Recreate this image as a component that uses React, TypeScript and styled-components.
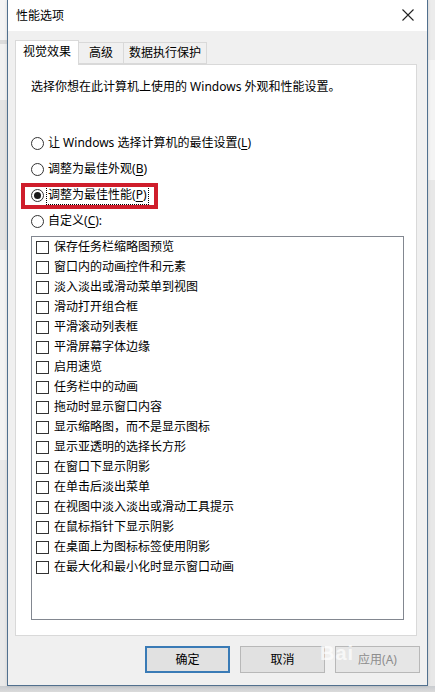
import React from "react";
import styled, { createGlobalStyle } from "styled-components";

const Global = createGlobalStyle`
  html, body { margin: 0; padding: 0; }
  body {
    width: 435px;
    height: 692px;
    overflow: hidden;
    background: #d6d6d6;
    font-family: "Noto Sans", "Noto Sans CJK SC", sans-serif;
    font-size: 12px;
    color: #000;
  }
`;

const Screen = styled.div`
  width: 435px;
  height: 692px;
  display: grid;
  grid-template-columns: 7px 421px 7px;
  grid-template-rows: 686px 6px;
  background: #d4d4d4;
`;

const BackStrip = styled.div<{ $side: "left" | "right" }>`
  background: ${(p) =>
    p.$side === "left"
      ? "linear-gradient(#f4f4f4 0 40px, #dcdcdc 40px 44px, #f1f1f1 44px 100px, #e4e4e4 100px 250px, #f3f3f3 250px 460px, #e9e9e9 460px)"
      : "linear-gradient(#ececec 0 60px, #f4f4f4 60px 180px, #e8e8e8 180px)"};
`;

const BottomStrip = styled.div`
  grid-column: 1 / 4;
  background: linear-gradient(#c9ccd0, #dadada);
`;

const Dialog = styled.div`
  position: relative;
  display: flex;
  flex-direction: column;
  border: 1px solid #51708e;
  border-top: none;
  background: #f0f0f0;
  box-shadow: 0 0 3px rgba(0, 0, 0, 0.15);
`;

const TitleBar = styled.div`
  height: 31px;
  background: #fff;
  display: flex;
  align-items: center;
  justify-content: space-between;
  padding: 0 9px 0 8px;
`;

const Title = styled.span`
  font-size: 12px;
  line-height: 16px;
  padding-top: 1px;
`;

const CloseBtn = styled.div`
  width: 20px;
  height: 20px;
  display: flex;
  align-items: center;
  justify-content: center;
  margin-top: -1px;
`;

const Body = styled.div`
  flex: 1;
  display: flex;
  flex-direction: column;
  padding: 9px 10px 12px 7px;
`;

const Tabs = styled.div`
  display: flex;
  align-items: flex-end;
  height: 24px;
  position: relative;
  z-index: 1;
`;

const Tab = styled.div<{ $active?: boolean; $w: number }>`
  width: ${(p) => p.$w}px;
  height: ${(p) => (p.$active ? 25 : 22)}px;
  margin-bottom: ${(p) => (p.$active ? -1 : 0)}px;
  box-sizing: border-box;
  border: 1px solid #d9d9d9;
  border-bottom: ${(p) => (p.$active ? "none" : "1px solid #d9d9d9")};
  margin-left: ${(p) => (p.$active ? 0 : -1)}px;
  background: ${(p) => (p.$active ? "#fff" : "#f0f0f0")};
  display: flex;
  align-items: center;
  justify-content: center;
  font-size: 12px;
  line-height: 16px;
  padding-bottom: ${(p) => (p.$active ? 3 : 0)}px;
`;

const Panel = styled.div`
  height: 572px;
  box-sizing: border-box;
  background: #fff;
  border: 1px solid #d9d9d9;
  padding: 14px 0 0 15px;
  display: flex;
  flex-direction: column;
`;

const Desc = styled.div`
  line-height: 16px;
  margin-bottom: 35px;
`;

const RadioRow = styled.div`
  height: 26px;
  display: flex;
  align-items: center;
  gap: 3px;
`;

const RadioCircle = styled.span<{ $checked?: boolean }>`
  width: 13px;
  height: 13px;
  box-sizing: border-box;
  border: 1px solid #333;
  border-radius: 50%;
  display: flex;
  align-items: center;
  justify-content: center;
  &::after {
    content: "";
    width: 7px;
    height: 7px;
    border-radius: 50%;
    background: ${(p) => (p.$checked ? "#1a1a1a" : "transparent")};
  }
`;

const RadioLabel = styled.span<{ $focus?: boolean }>`
  line-height: 16px;
  padding: 1px 1px;
  outline: ${(p) => (p.$focus ? "1px dotted #000" : "none")};
  outline-offset: 0;
`;

const U = styled.span`
  text-decoration: underline;
  text-underline-offset: 2px;
`;

const ListBox = styled.div`
  margin-top: 2px;
  width: 373px;
  height: 384px;
  box-sizing: border-box;
  border: 1px solid #828790;
  display: flex;
  flex-direction: column;
`;

const CheckRow = styled.div`
  height: 20px;
  display: flex;
  align-items: center;
  padding-left: 4px;
  gap: 5px;
`;

const CheckBox = styled.span`
  width: 13px;
  height: 13px;
  box-sizing: border-box;
  border: 1px solid #333;
  background: #fff;
`;

const CheckLabel = styled.span`
  line-height: 16px;
`;

const ButtonRow = styled.div`
  display: flex;
  justify-content: flex-end;
  gap: 10px;
  margin-top: 10px;
  margin-right: -3px;
`;

const Button = styled.div<{ $default?: boolean; $disabled?: boolean }>`
  width: 85px;
  height: 27px;
  box-sizing: border-box;
  border: ${(p) => (p.$default ? "2px solid #3a7bb6" : "1px solid #b8b8b8")};
  background: ${(p) => (p.$disabled ? "#e6e6e6" : "#e1e1e1")};
  color: ${(p) => (p.$disabled ? "#8d8d8d" : "#000")};
  display: flex;
  align-items: center;
  justify-content: center;
  font-size: 12px;
  line-height: 16px;
`;

const Annotation = styled.div`
  position: absolute;
  left: 13px;
  top: 183px;
  width: 137px;
  height: 26px;
  box-sizing: border-box;
  border: 4px solid #cf1d2b;
  pointer-events: none;
`;

const Watermark = styled.div`
  position: absolute;
  left: 312px;
  top: 642px;
  font-family: "Liberation Sans", sans-serif;
  font-size: 20px;
  font-weight: bold;
  color: rgba(255, 255, 255, 0.7);
  pointer-events: none;
  letter-spacing: 1px;
`;

const radios = [
  { label: "让 Windows 选择计算机的最佳设置", key: "L" },
  { label: "调整为最佳外观", key: "B" },
  { label: "调整为最佳性能", key: "P", checked: true },
  { label: "自定义", key: "C", colon: true },
];

const items = [
  "保存任务栏缩略图预览",
  "窗口内的动画控件和元素",
  "淡入淡出或滑动菜单到视图",
  "滑动打开组合框",
  "平滑滚动列表框",
  "平滑屏幕字体边缘",
  "启用速览",
  "任务栏中的动画",
  "拖动时显示窗口内容",
  "显示缩略图，而不是显示图标",
  "显示亚透明的选择长方形",
  "在窗口下显示阴影",
  "在单击后淡出菜单",
  "在视图中淡入淡出或滑动工具提示",
  "在鼠标指针下显示阴影",
  "在桌面上为图标标签使用阴影",
  "在最大化和最小化时显示窗口动画",
];

export default function App() {
  return (
    <>
      <Global />
      <Screen>
        <BackStrip $side="left" />
        <Dialog>
          <TitleBar>
            <Title>性能选项</Title>
            <CloseBtn>
              <svg width="12" height="12" viewBox="0 0 12 12">
                <path d="M0.5 0.5 L11.5 11.5 M11.5 0.5 L0.5 11.5" stroke="#222" strokeWidth="1.1" fill="none" />
              </svg>
            </CloseBtn>
          </TitleBar>
          <Body>
            <Tabs>
              <Tab $active $w={64}>视觉效果</Tab>
              <Tab $w={46}>高级</Tab>
              <Tab $w={84}>数据执行保护</Tab>
            </Tabs>
            <Panel>
              <Desc>选择你想在此计算机上使用的 Windows 外观和性能设置。</Desc>
              {radios.map((r) => (
                <RadioRow key={r.key}>
                  <RadioCircle $checked={r.checked} />
                  <RadioLabel $focus={r.checked}>
                    {r.label}(<U>{r.key}</U>){r.colon ? ":" : ""}
                  </RadioLabel>
                </RadioRow>
              ))}
              <ListBox>
                {items.map((t) => (
                  <CheckRow key={t}>
                    <CheckBox />
                    <CheckLabel>{t}</CheckLabel>
                  </CheckRow>
                ))}
              </ListBox>
            </Panel>
            <ButtonRow>
              <Button $default>确定</Button>
              <Button>取消</Button>
              <Button $disabled>应用(A)</Button>
            </ButtonRow>
          </Body>
          <Annotation />
          <Watermark>Bai</Watermark>
        </Dialog>
        <BackStrip $side="right" />
        <BottomStrip />
      </Screen>
    </>
  );
}
